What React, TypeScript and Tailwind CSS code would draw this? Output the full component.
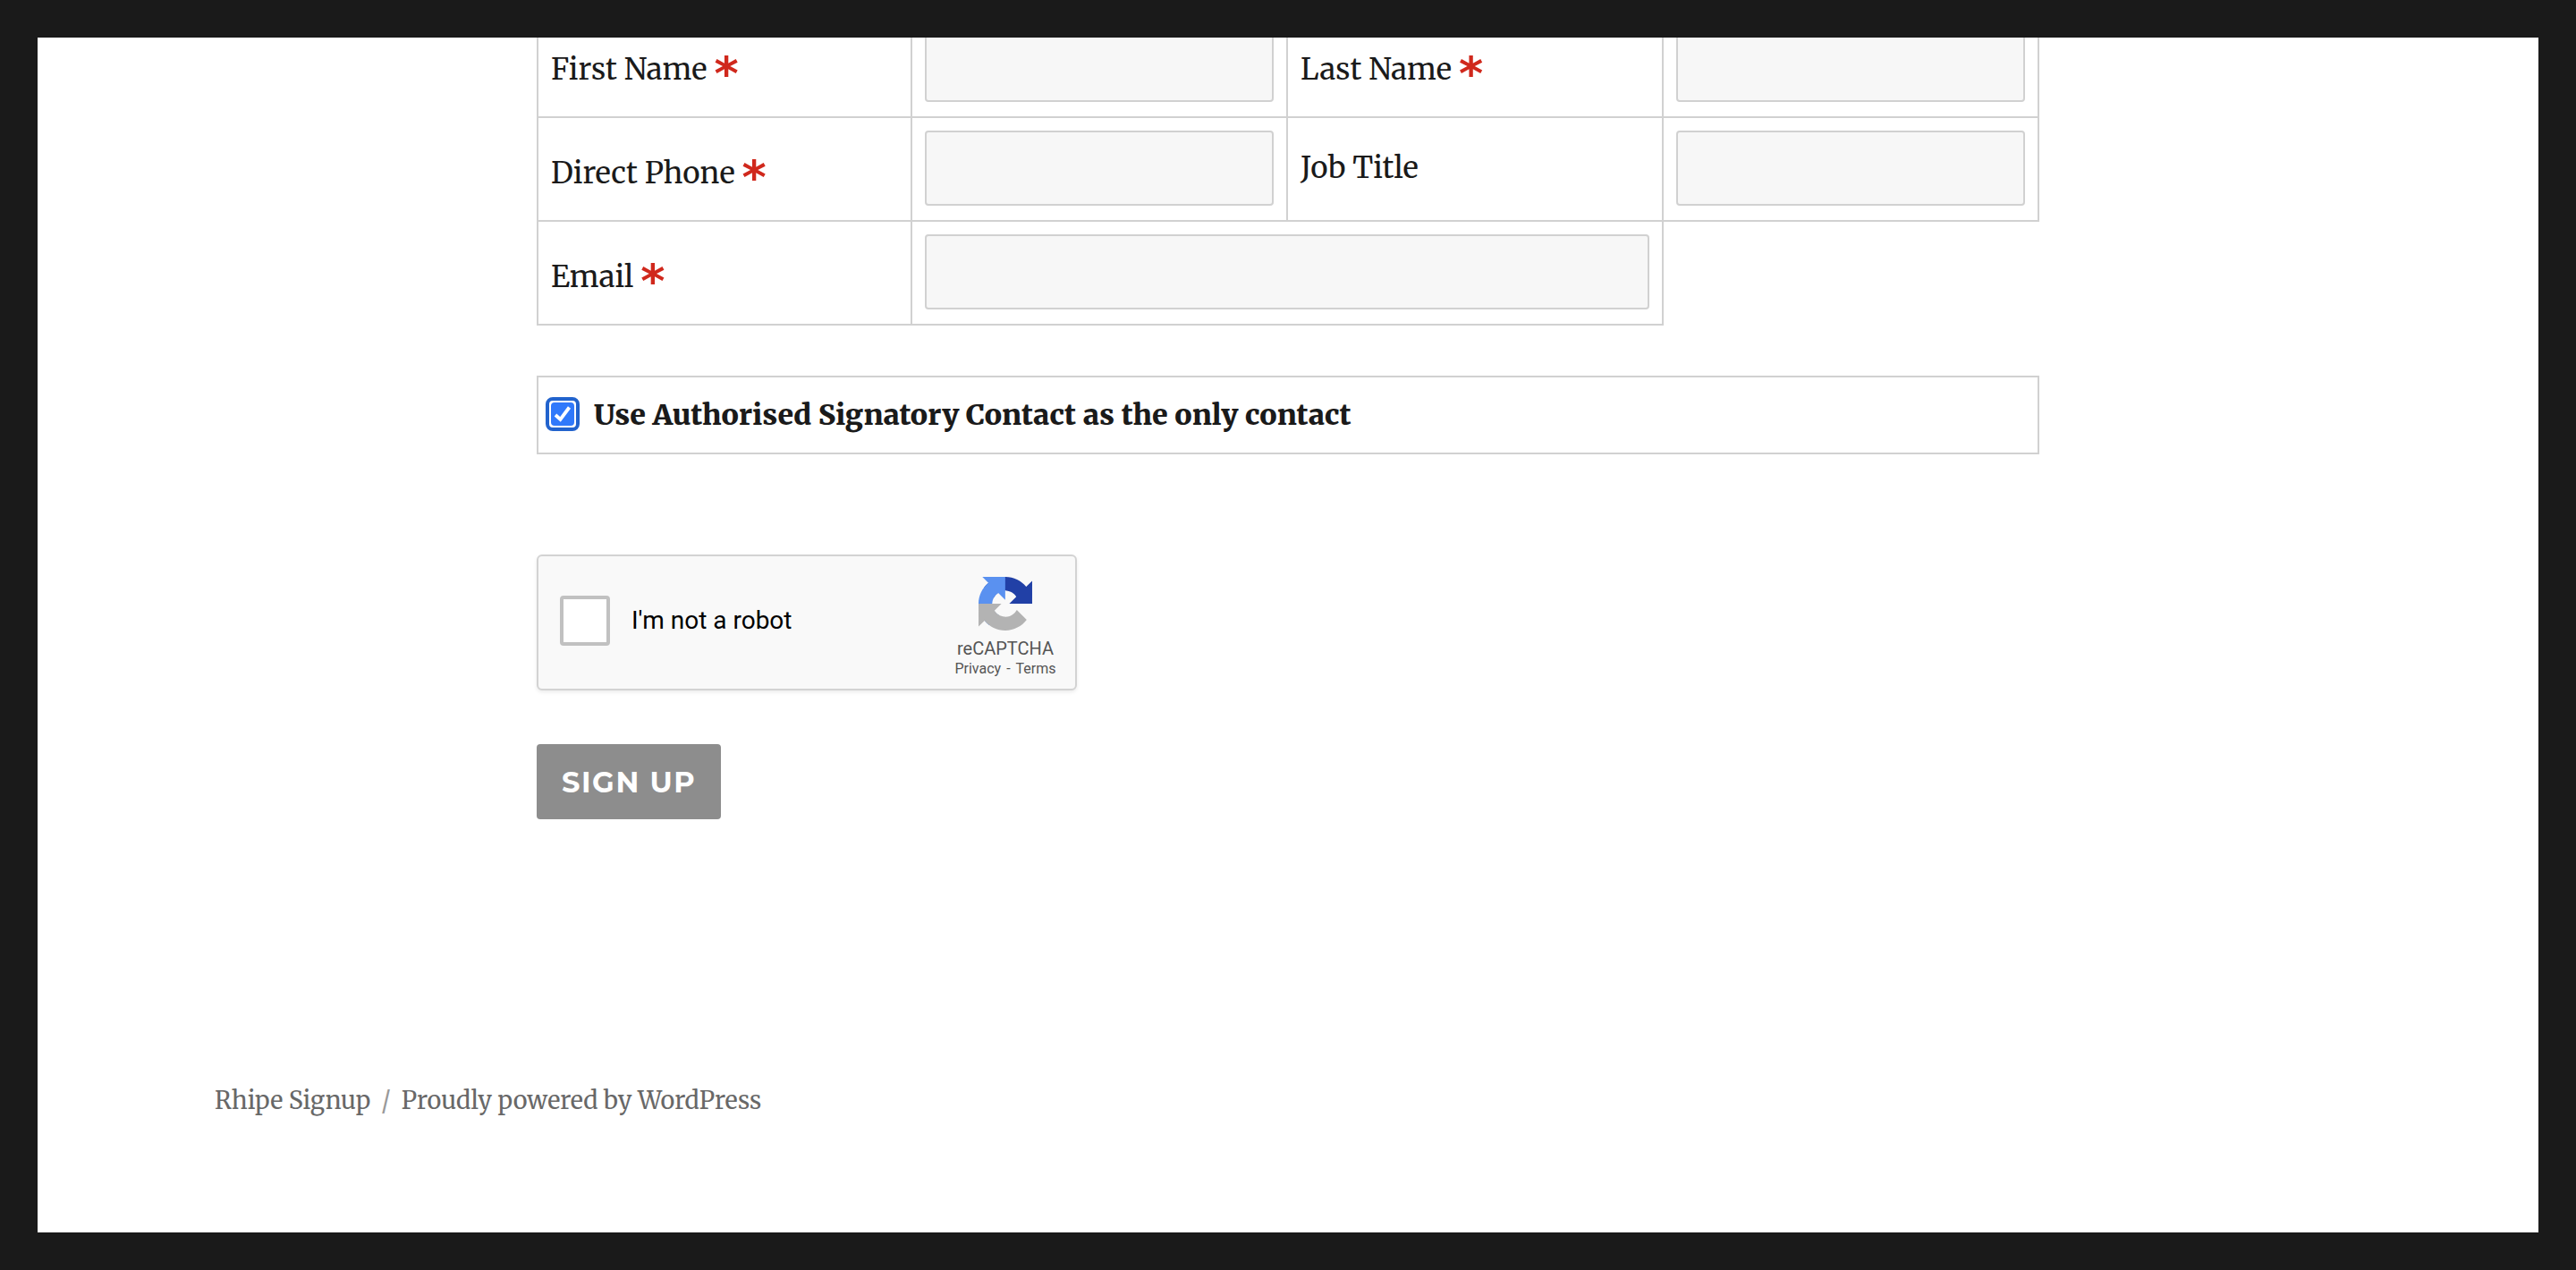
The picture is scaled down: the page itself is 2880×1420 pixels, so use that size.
import { useState } from 'react';

const inputClass =
  'block h-[84px] w-full rounded-[4px] border-2 border-[#d1d1d1] bg-[#f7f7f7] px-4 text-[30px] text-[#1a1a1a] outline-none';
const cellClass =
  'border-r-2 border-b-2 border-[#d1d1d1] px-[14px] pt-[14px] pb-4 align-middle text-left font-normal first:border-l-2';

function Label({ htmlFor, text, required = false }: { htmlFor: string; text: string; required?: boolean }) {
  return (
    <th scope="row" className={cellClass}>
      <label htmlFor={htmlFor} className="flex items-center gap-2 whitespace-nowrap">
        <span className={required ? 'pt-3' : ''}>{text}</span>
        {required && (
          <span className="h-9 font-['DejaVu_Sans'] text-[52px] leading-[56px] font-bold text-[#d0281c]">*</span>
        )}
      </label>
    </th>
  );
}

function Field({ id, type = 'text', colSpan = 1 }: { id: string; type?: string; colSpan?: number }) {
  return (
    <td colSpan={colSpan} className={cellClass}>
      <input id={id} name={id} type={type} className={inputClass} />
    </td>
  );
}

function RecaptchaLogo() {
  return (
    <svg viewBox="0 0 64 64" className="h-[60px] w-[60px]" aria-hidden="true">
      <path
        fill="#2140a6"
        d="M64 31.955l-.033-1.37V4.687l-7.16 7.16C50.948 4.674 42.033.093 32.05.093c-10.4 0-19.622 4.96-25.458 12.64l11.736 11.86a15.55 15.55 0 0 1 4.754-5.334c2.05-1.6 4.952-2.906 8.968-2.906.485 0 .86.057 1.135.163 4.976.393 9.288 3.14 11.828 7.124l-8.307 8.307L64 31.953"
      />
      <path
        fill="#5a91f0"
        d="M31.862.094l-1.37.033H4.594l7.16 7.16C4.58 13.147 0 22.06 0 32.046c0 10.4 4.96 19.622 12.64 25.458L24.5 45.768a15.55 15.55 0 0 1-5.334-4.754c-1.6-2.05-2.906-4.952-2.906-8.968 0-.485.057-.86.163-1.135.393-4.976 3.14-9.288 7.124-11.828l8.307 8.307L31.86.095"
      />
      <path
        fill="#b3b3b3"
        d="M.001 32.045l.033 1.37v25.898l7.16-7.16c5.86 7.173 14.774 11.754 24.76 11.754 10.4 0 19.622-4.96 25.458-12.64l-11.736-11.86a15.55 15.55 0 0 1-4.754 5.334c-2.05 1.6-4.952 2.906-8.968 2.906-.485 0-.86-.057-1.135-.163-4.976-.393-9.288-3.14-11.828-7.124l8.307-8.307c-10.522.04-22.4.066-27.295-.005"
      />
    </svg>
  );
}

function Recaptcha() {
  return (
    <div className="mt-28 flex h-[152px] w-[604px] max-w-full items-center rounded-[6px] border-2 border-[#d3d3d3] bg-[#f9f9f9] pl-6 font-['Roboto',sans-serif] shadow-[0_2px_4px_rgba(0,0,0,0.08)]">
      <label className="flex flex-1 items-center gap-6 pb-1 text-[28px] leading-8 text-black">
        <input
          type="checkbox"
          name="robot"
          className="h-14 w-14 appearance-none rounded-[4px] border-4 border-[#c1c1c1] bg-white"
        />
        I'm not a robot
      </label>
      <div className="flex w-[156px] flex-col items-center pt-3 text-[#555]">
        <RecaptchaLogo />
        <div className="mt-2 text-[20px] leading-6">reCAPTCHA</div>
        <div className="flex gap-[6px] text-[16px] leading-[22px]">
          <a href="#privacy">Privacy</a>
          <span>-</span>
          <a href="#terms">Terms</a>
        </div>
      </div>
    </div>
  );
}

export default function App() {
  const [only, setOnly] = useState(true);
  return (
    <div className="flex min-h-screen flex-col bg-[#1a1a1a] p-[42px] font-['Merriweather','DejaVu_Serif_Condensed','DejaVu_Serif',serif] text-[33px] leading-[58px] text-[#1a1a1a]">
      <div className="flex-1 overflow-hidden bg-white">
        <form className="mx-auto w-full max-w-[1680px]" onSubmit={(e) => e.preventDefault()}>
          <table className="-mt-[26px] w-full table-fixed border-separate border-spacing-0">
            <tbody>
              <tr>
                <Label htmlFor="first-name" text="First Name" required />
                <Field id="first-name" />
                <Label htmlFor="last-name" text="Last Name" required />
                <Field id="last-name" />
              </tr>
              <tr>
                <Label htmlFor="phone" text="Direct Phone" required />
                <Field id="phone" type="tel" />
                <Label htmlFor="job-title" text="Job Title" />
                <Field id="job-title" />
              </tr>
              <tr>
                <Label htmlFor="email" text="Email" required />
                <Field id="email" type="email" colSpan={2} />
              </tr>
            </tbody>
          </table>

          <label className="mt-14 flex h-[88px] items-center gap-4 border-2 border-[#d1d1d1] pl-2 text-[32px] font-black">
            <span className="grid pb-[2px]">
              <input
                type="checkbox"
                name="only-contact"
                checked={only}
                onChange={(e) => setOnly(e.target.checked)}
                className="peer col-start-1 row-start-1 h-[38px] w-[38px] appearance-none rounded-[8px] border-4 border-[#2263cd] bg-white p-[2px] outline-none before:block before:h-full before:w-full before:rounded-[4px] before:bg-[#3079fb]"
              />
              <svg
                viewBox="0 0 26 26"
                className="pointer-events-none invisible col-start-1 row-start-1 h-[26px] w-[26px] self-center justify-self-center peer-checked:visible"
                aria-hidden="true"
              >
                <path d="M5 14 L10.5 19 L20.5 5.5" fill="none" stroke="#fff" strokeWidth="3.8" />
              </svg>
            </span>
            Use Authorised Signatory Contact as the only contact
          </label>

          <Recaptcha />

          <button
            type="submit"
            className="mt-[60px] block h-[84px] rounded-[4px] bg-[#8d8d8d] px-7 pt-[2px] font-['Montserrat','Inter',sans-serif] text-[32px] leading-9 font-bold tracking-wider text-white uppercase"
          >
            Sign Up
          </button>
        </form>

        <footer className="mx-auto mt-[286px] flex w-full max-w-[2640px] gap-3 px-[120px] text-[27px] leading-[56px] text-[#686868]">
          <a href="#home">Rhipe Signup</a>
          <span className="text-[#999]">/</span>
          <a href="#wordpress">Proudly powered by WordPress</a>
        </footer>
      </div>
    </div>
  );
}
